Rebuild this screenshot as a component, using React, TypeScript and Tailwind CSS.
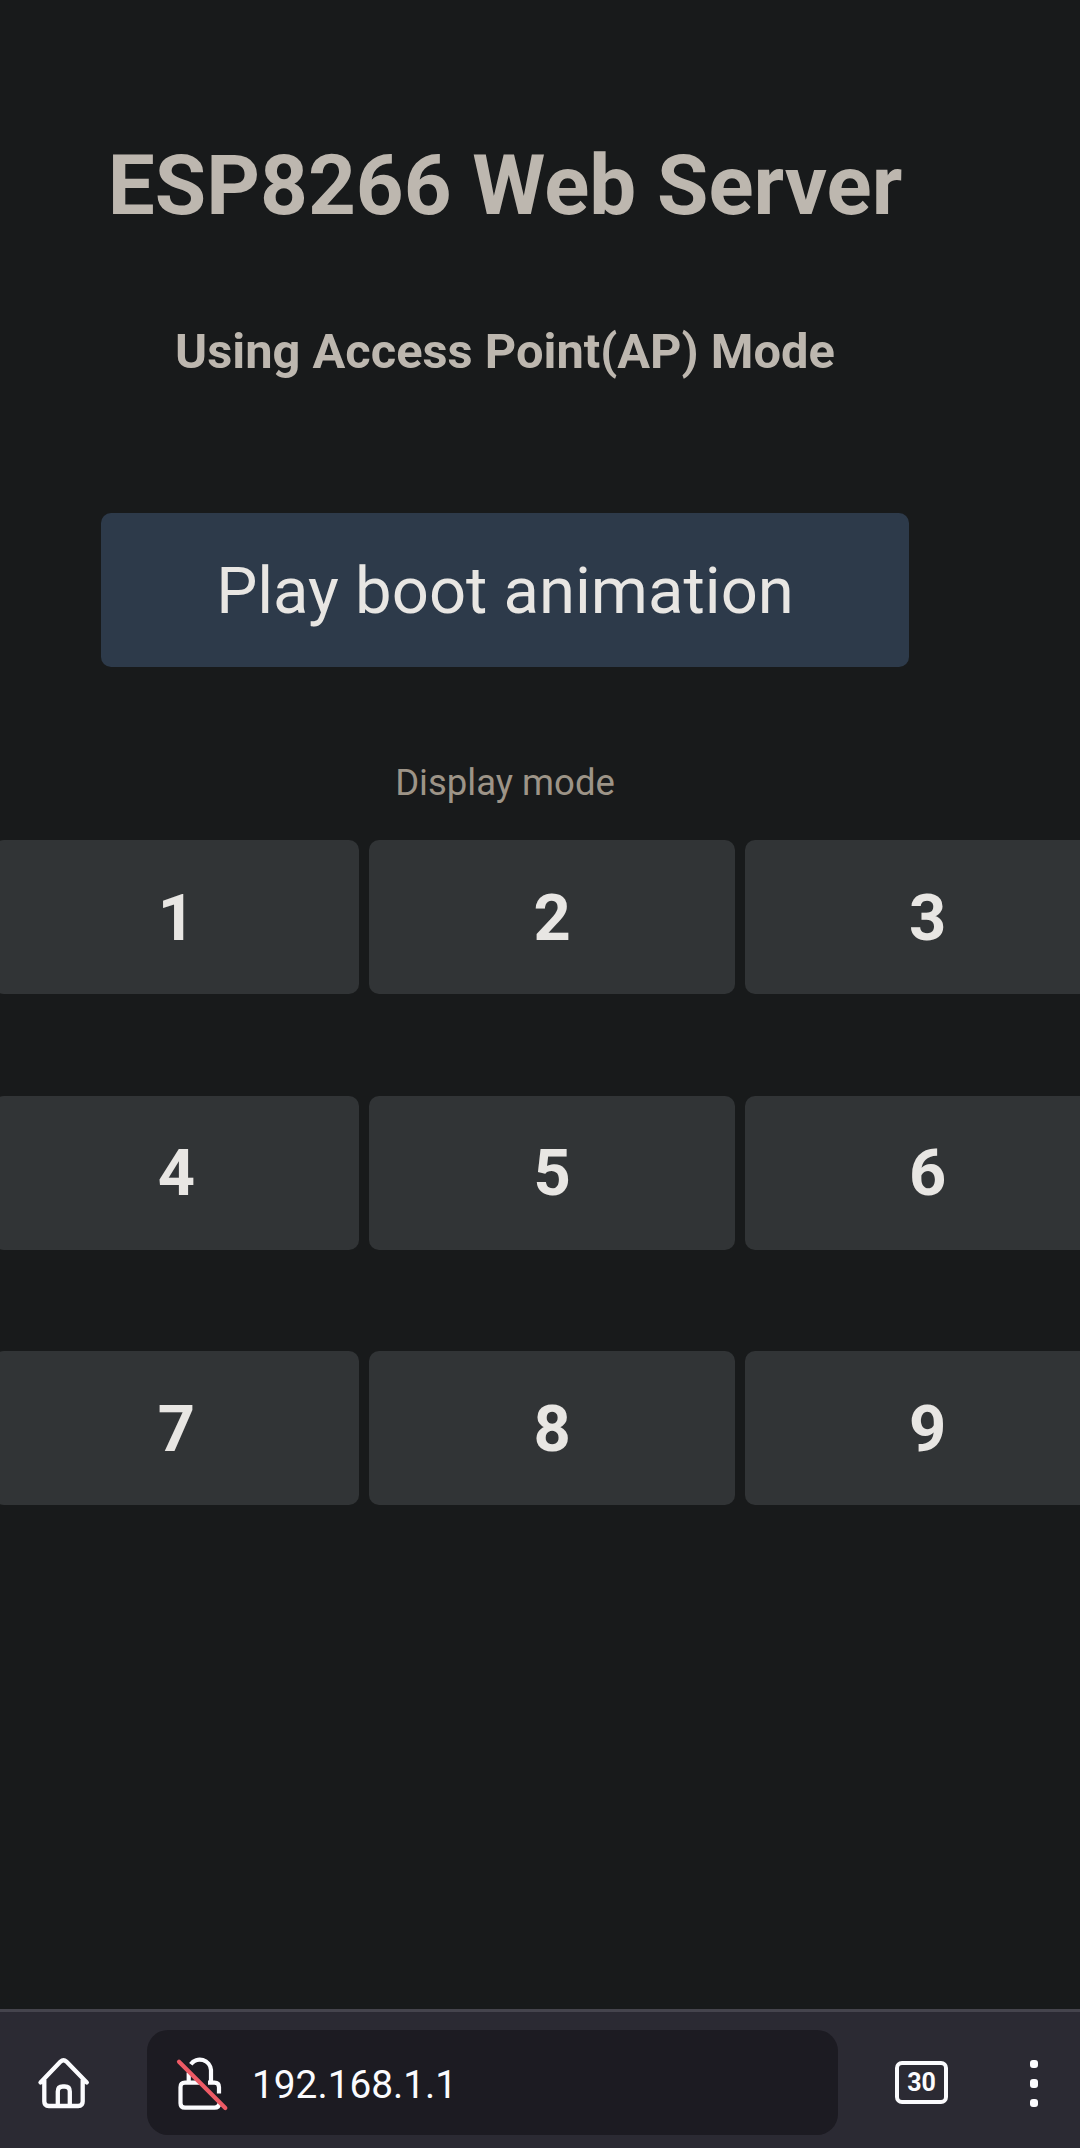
const rows = [
  [1, 2, 3],
  [4, 5, 6],
  [7, 8, 9],
];

function HomeIcon() {
  return (
    <svg className="ml-9 h-14 w-14 shrink-0" viewBox="0 0 56 56" fill="none" stroke="currentColor" strokeWidth="4.3" strokeLinecap="round" strokeLinejoin="round">
      <path d="M4.5 27.5 24.6 6.6Q27.5 3.8 30.4 6.6L50.8 27.5M8.3 25v21.5q0 4.5 4.5 4.5h29.4q4.5 0 4.5-4.5V25M21.8 50V36.5q0-5 5-5h2q5 0 5 5V50" />
    </svg>
  );
}

function InsecureIcon() {
  return (
    <svg className="ml-7 h-14 w-14 shrink-0" viewBox="0 0 56 56" fill="none" stroke="currentColor" strokeWidth="4.2">
      <path d="M15.8 9.2A11.2 11.2 0 0 1 36 15v12.7M13.7 17.5v10.2M24 27.7H10q-4.5 0-4.5 4.5v16q0 4.5 4.5 4.5h29.5q4.5 0 4.8-4.2M33 27.7h6.5q4.5 0 4.5 4.5v6.3" />
      <path stroke="#ed5a65" strokeLinecap="round" d="m4 6.7 46.3 46.3" />
    </svg>
  );
}

export default function App() {
  return (
    <div className="flex h-[2148px] w-[1080px] flex-col overflow-hidden bg-[#181a1b] font-['Roboto',sans-serif]">
      <main className="flex flex-1 flex-col overflow-hidden pt-[136px]">
        <div className="flex w-[1010px] flex-col items-center">
          <h1 className="h-[100px] text-[83.5px] leading-[100px] font-bold text-[#bdb7af]">ESP8266 Web Server</h1>
          <h3 className="mt-[86px] h-[60px] text-[48.8px] leading-[60px] font-bold text-[#bdb7af]">Using Access Point(AP) Mode</h3>
          <button className="mt-[131px] h-[154px] w-[808px] rounded-[10px] bg-[#2d3a4a] pt-[3px] text-[65.2px] text-[#e8e6e3]">Play boot animation</button>
          <p className="mt-[93px] h-[46px] text-[36.5px] leading-[46px] text-[#9d9487]">Display mode</p>
        </div>
        <div className="mt-[34px] -ml-[6.5px] flex flex-col gap-[101.7px]">
          {rows.map((row) => (
            <div key={row[0]} className="flex gap-[10px]">
              {row.map((n) => (
                <button key={n} className="h-[154px] w-[365.7px] shrink-0 rounded-[10px] bg-[#313436] pt-[3px] text-[65px] font-bold text-[#e8e6e3]">
                  {n}
                </button>
              ))}
            </div>
          ))}
        </div>
      </main>
      <footer className="flex h-[139px] items-center border-t-[3px] border-[#45444d] bg-[#2b2a33] pt-[5px] text-[#fbfbfe]">
        <HomeIcon />
        <div className="ml-[55px] flex h-[105px] w-[691px] shrink-0 items-center rounded-[21px] bg-[#1c1b22]">
          <InsecureIcon />
          <span className="ml-[21px] pt-[5px] text-[38.8px]">192.168.1.1</span>
        </div>
        <div className="ml-[57px] flex h-[43px] w-[53px] shrink-0 items-center justify-center rounded-[7px] border-4 border-current text-[25px] leading-none font-bold">30</div>
        <div className="ml-[82px] flex flex-col gap-[11px] pt-[2px]">
          <i className="h-[8.5px] w-2 rounded-[3px] bg-current" />
          <i className="h-[8.5px] w-2 rounded-[3px] bg-current" />
          <i className="h-[8.5px] w-2 rounded-[3px] bg-current" />
        </div>
      </footer>
    </div>
  );
}
